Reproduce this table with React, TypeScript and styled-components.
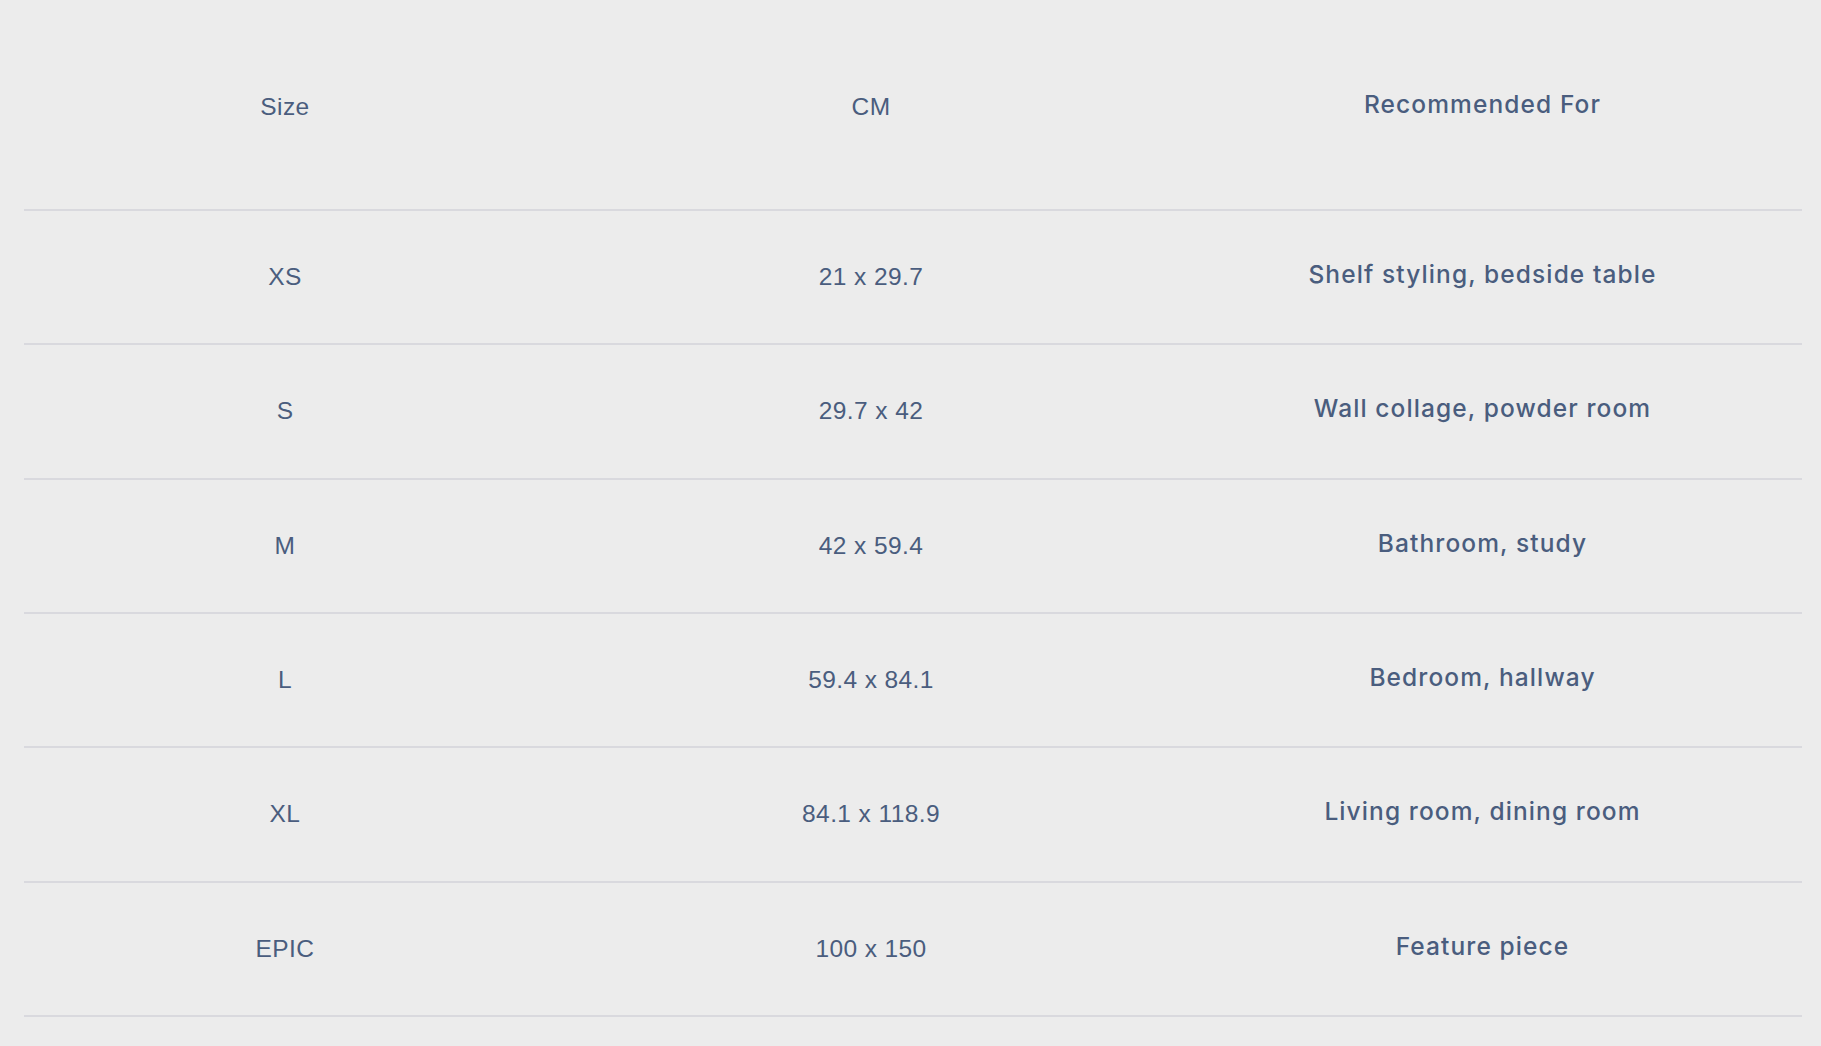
import styled, { createGlobalStyle } from "styled-components";

interface SizeRow {
  size: string;
  cm: string;
  use: string;
}

const rows: SizeRow[] = [
  { size: "XS", cm: "21 x 29.7", use: "Shelf styling, bedside table" },
  { size: "S", cm: "29.7 x 42", use: "Wall collage, powder room" },
  { size: "M", cm: "42 x 59.4", use: "Bathroom, study" },
  { size: "L", cm: "59.4 x 84.1", use: "Bedroom, hallway" },
  { size: "XL", cm: "84.1 x 118.9", use: "Living room, dining room" },
  { size: "EPIC", cm: "100 x 150", use: "Feature piece" },
];

const App = () => {
  return (
    <>
      <GlobalStyle />
      <Page>
        <Table>
          <Row $head>
            <Cell>Size</Cell>
            <Cell>CM</Cell>
            <UseCell>Recommended For</UseCell>
          </Row>
          {rows.map((row) => (
            <Row key={row.size}>
              <Cell>{row.size}</Cell>
              <Cell>{row.cm}</Cell>
              <UseCell>{row.use}</UseCell>
            </Row>
          ))}
        </Table>
      </Page>
    </>
  );
};

export default App;

const GlobalStyle = createGlobalStyle`
  html, body {
    margin: 0;
    padding: 0;
    background: #ececec;
  }
`;

const Page = styled.div`
  min-height: 1046px;
  background: #ececec;
  padding: 0 19px 0 24px;
  box-sizing: border-box;
`;

const Table = styled.div`
  display: flex;
  flex-direction: column;
`;

const Row = styled.div<{ $head?: boolean }>`
  display: grid;
  grid-template-columns: 522px 650px 1fr;
  align-items: center;
  box-sizing: border-box;
  height: ${(props) => (props.$head ? "211px" : "134.33px")};
  padding-top: ${(props) => (props.$head ? "5px" : "0")};
  border-bottom: 2px solid #d9d9de;
`;

const Cell = styled.div`
  text-align: center;
  font-family: "Liberation Sans", Arial, sans-serif;
  font-size: 24.5px;
  color: #4a5d7e;
  letter-spacing: 0.4px;
`;

const UseCell = styled.div`
  text-align: center;
  padding: 0 33px 6px 0;
  font-family: Inter, "Noto Sans", sans-serif;
  font-weight: 550;
  font-size: 24.5px;
  letter-spacing: 1.1px;
  color: #4a5d7e;
`;
